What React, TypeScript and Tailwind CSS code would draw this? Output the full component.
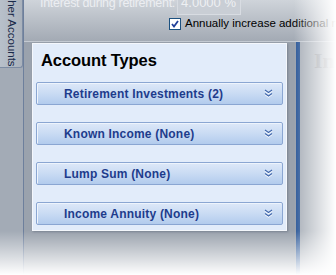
const sections = [
  'Retirement Investments (2)',
  'Known Income (None)',
  'Lump Sum (None)',
  'Income Annuity (None)',
]

function Chevrons() {
  return (
    <svg width="9" height="9" viewBox="0 0 9 9" className="shrink-0">
      <path d="M1 1.5 L4.5 4 L8 1.5" fill="none" stroke="#ffffff" strokeWidth="2" />
      <path d="M1 5 L4.5 7.5 L8 5" fill="none" stroke="#ffffff" strokeWidth="2" />
      <path d="M1 1 L4.5 3.5 L8 1" fill="none" stroke="#3f67ad" strokeWidth="1.3" />
      <path d="M1 4.5 L4.5 7 L8 4.5" fill="none" stroke="#3f67ad" strokeWidth="1.3" />
    </svg>
  )
}

function SectionButton({ label }: { label: string }) {
  return (
    <div className="h-[23px] flex items-center pl-[27px] pr-[9px] border border-[#8aa6d2] rounded-[2px] bg-gradient-to-b from-[#dde8f8] via-[#c9dbf3] to-[#b2cbed] shadow-[inset_1px_1px_0_#eef4fc]">
      <span className="flex-1 text-[12px] font-bold text-[#1e3c8c] tracking-[0.2px]">{label}</span>
      <Chevrons />
    </div>
  )
}

export default function App() {
  return (
    <div className="relative w-[336px] h-[275px] overflow-hidden bg-[#9aa2ad] font-['Liberation_Sans',Arial,sans-serif]">
      <div className="flex h-full">
        {/* side tab strip */}
        <div className="w-[24px] shrink-0 flex flex-col border-r border-[#6d7f9c] bg-[#a3abb6]">
          <div className="h-[68px] w-[23px] border-r border-b border-[#7d8ca3] rounded-br-[3px] bg-gradient-to-r from-[#b8c0ca] to-[#aab2bc] overflow-hidden flex justify-center">
            <span className="[writing-mode:vertical-rl] text-[11.5px] leading-none text-[#1a2a4a] mt-[-12px] whitespace-nowrap">Other Accounts</span>
          </div>
          <div className="flex-1" />
        </div>

        <div className="flex-1 flex flex-col">
          {/* top settings */}
          <div className="h-[42px] shrink-0 border-b border-[#c4cad2] bg-gradient-to-b from-[#cfd4da] to-[#a3aab4]">
            <div className="flex items-start pl-[16px] mt-[-6px]">
              <span className="w-[137px] text-[12.5px] tracking-[-0.3px] text-[#eceef2] whitespace-nowrap overflow-hidden">Interest during retirement:</span>
              <div className="w-[64px] h-[21px] border border-[#d8dce2] bg-[#c9ced5] text-right pr-[4px] text-[13px] leading-[13px] text-[#eef0f3] pt-[1px]">4.0000 %</div>
            </div>
            <div className="flex items-center gap-[4px] pl-[145px]">
              <div className="w-[12px] h-[12px] border border-[#1c5180] bg-white flex items-center justify-center">
                <svg width="8" height="8" viewBox="0 0 8 8">
                  <path d="M1 4 L3 6.5 L7 1" fill="none" stroke="#21409a" strokeWidth="1.8" />
                </svg>
              </div>
              <span className="text-[11.5px] text-[#000] whitespace-nowrap">Annually increase additional money</span>
            </div>
          </div>

          {/* body */}
          <div className="flex-1 flex">
            <div className="w-[263px] shrink-0 pl-[8px] pt-[1px]">
              <div className="w-[255px] h-[188px] border border-[#f4f7fc] bg-[#e2ecfa] shadow-[1px_1px_2px_rgba(60,70,90,0.35)] px-[3px]">
                <div className="pl-[5px] pt-[4px] h-[38px] text-[16.5px] font-bold text-[#000] tracking-[-0.1px]">Account Types</div>
                <div className="flex flex-col gap-[17px]">
                  {sections.map((s) => <SectionButton key={s} label={s} />)}
                </div>
              </div>
            </div>
            <div className="w-[9px] shrink-0" />
            <div className="w-[4px] shrink-0 bg-[#2c5898]" />
            <div className="flex-1 bg-[#a7aeb7] pl-[14px] pt-[2px]">
              <span className="font-['Liberation_Serif',serif] font-bold text-[22px] text-[#8b9098]">In</span>
            </div>
          </div>
        </div>
      </div>

      {/* screenshot fade effect */}
      <div className="absolute left-0 right-0 bottom-0 h-[44px] bg-gradient-to-b from-transparent to-white pointer-events-none" />
      <div className="absolute top-0 bottom-0 right-0 w-[42px] bg-gradient-to-r from-transparent to-white pointer-events-none" />
    </div>
  )
}
